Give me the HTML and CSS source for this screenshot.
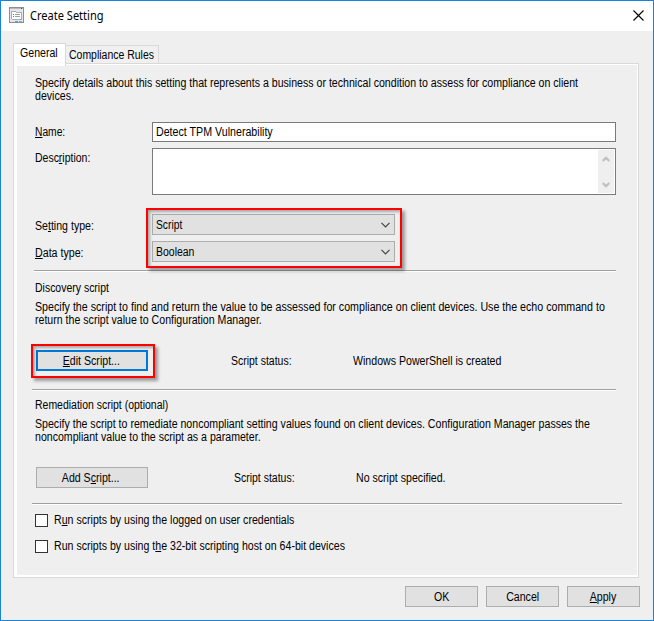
FILE: index.html
```html
<!DOCTYPE html>
<html lang="en">
<head>
<meta charset="utf-8">
<title>Create Setting</title>
<link rel="stylesheet" href="styles.css">
</head>
<body>
<div class="window">
  <header class="titlebar">
    <svg class="app-icon" width="15" height="16" viewBox="0 0 15 16" shape-rendering="crispEdges">
      <rect x="0.5" y="0.5" width="14" height="15" fill="#e4e6ea" stroke="#8b8f96"/>
      <rect x="1" y="1" width="13" height="1" fill="#b5b8be"/>
      <rect x="12" y="1" width="1" height="1" fill="#555"/>
      <rect x="3" y="5" width="9" height="8" fill="#fff"/>
      <path d="M2.5 4v8M3 4.5h4M7 5.5h5.500v7H3" fill="none" stroke="#a9adb4"/>
      <path d="M6 7.500h5M6 9.500h5" stroke="#9a9ea6"/>
      <path d="M4 7.500h1M4 9.500h1" stroke="#3f8fc8"/>
      <rect x="6" y="14" width="3" height="1" fill="#20b4e0"/><rect x="10" y="14" width="3" height="1" fill="#a2a6ad"/>
    </svg>
    <h1 class="title">Create Setting</h1>
    <svg class="close" width="11" height="11" viewBox="0 0 11 11"><path d="M.5.5l10 10M10.5.5l-10 10" stroke="#000" stroke-width="1.1" fill="none"/></svg>
  </header>
  <nav class="tabs">
    <div class="tab tab-active"><span class="text">General</span></div>
    <div class="tab"><span class="text text-snug">Compliance Rules</span></div>
  </nav>
  <main class="pane">
    <p class="intro"><span class="text">Specify details about this setting that represents a business or technical condition to assess for compliance on client</span><br><span class="text">devices.</span></p>
    <div class="fields">
      <label class="label"><span class="text text-tight"><u>N</u>ame:</span></label>
      <div class="input"><span class="text text-wide">Detect TPM Vulnerability</span></div>
      <label class="label label-top"><span class="text text-snug">Desc<u>r</u>iption:</span></label>
      <div class="textarea">
        <div class="scrollbar">
          <svg width="8" height="6" viewBox="0 0 8 6"><path d="M.7 5l3.3-3.3L7.3 5" fill="none" stroke="#bfbfbf" stroke-width="2.2"/></svg>
          <svg width="8" height="6" viewBox="0 0 8 6"><path d="M.7 1L4 4.3 7.3 1" fill="none" stroke="#bfbfbf" stroke-width="2.2"/></svg>
        </div>
      </div>
    </div>
    <div class="types">
      <div class="type-labels">
        <label class="label"><span class="text">Se<u>t</u>ting type:</span></label>
        <label class="label"><span class="text text-wide"><u>D</u>ata type:</span></label>
      </div>
      <div class="combos marked">
        <div class="combo"><span class="text text-tight">Script</span><svg width="9" height="6" viewBox="0 0 9 6"><path d="M.5.8l4 4 4-4" fill="none" stroke="#444" stroke-width="1.2"/></svg></div>
        <div class="combo"><span class="text text-snug">Boolean</span><svg width="9" height="6" viewBox="0 0 9 6"><path d="M.5.8l4 4 4-4" fill="none" stroke="#444" stroke-width="1.2"/></svg></div>
      </div>
    </div>
    <div class="rule rule-first"></div>
    <section class="section">
      <h2><span class="text text-snug">Discovery script</span></h2>
      <p><span class="text text-wide">Specify the script to find and return the value to be assessed for compliance on client devices. Use the echo command to</span><br><span class="text">return the script value to Configuration Manager.</span></p>
      <div class="action">
        <div class="marked marked-button"><div class="button button-wide button-focus"><span class="text"><u>E</u>dit Script...</span></div></div>
        <div><span class="text text-snug">Script status:</span></div>
        <div><span class="text">Windows PowerShell is created</span></div>
      </div>
    </section>
    <div class="rule"></div>
    <section class="section section-remedy">
      <h2><span class="text text-snug">Remediation script (optional)</span></h2>
      <p><span class="text">Specify the script to remediate noncompliant setting values found on client devices. Configuration Manager passes the</span><br><span class="text">noncompliant value to the script as a parameter.</span></p>
      <div class="action action-remedy">
        <div class="button button-wide"><span class="text">Add S<u>c</u>ript...</span></div>
        <div><span class="text text-snug">Script status:</span></div>
        <div><span class="text">No script specified.</span></div>
      </div>
    </section>
    <div class="rule rule-long"></div>
    <div class="checks">
      <label class="check"><i class="box"></i><span class="text">R<u>u</u>n scripts by using the logged on user credentials</span></label>
      <label class="check"><i class="box"></i><span class="text">Run scripts by using t<u>h</u>e 32-bit scripting host on 64-bit devices</span></label>
    </div>
  </main>
  <footer class="footer">
    <div class="button"><span class="text">OK</span></div>
    <div class="button"><span class="text">Cancel</span></div>
    <div class="button"><span class="text"><u>A</u>pply</span></div>
  </footer>
</div>
</body>
</html>
```
FILE: styles.css
```css
* { box-sizing: border-box; }
body { margin: 0; font: 12px/13px "Liberation Sans", Arial, sans-serif; color: #000; white-space: nowrap; }
h1, h2, p { margin: 0; font-size: 12px; font-weight: normal; }
u { text-underline-offset: 1px; text-decoration-thickness: 1px; }

/* Condensed dialog lettering */
.text { display: inline-block; vertical-align: top; transform: scaleX(.883); transform-origin: 0 50%; }
.text-tight { transform: scaleX(.855); }
.text-snug { transform: scaleX(.873); }
.text-wide { transform: scaleX(.888); }

.window { width: 654px; height: 621px; border: 1px solid #1883d7; background: #efefef; overflow: hidden; }
.titlebar { display: flex; align-items: center; height: 30px; padding: 0 9px 0 8px; background: #fff; }
.app-icon { margin-bottom: 2px; }
.title { margin-left: 6px; font: 12px/16px "Noto Sans", sans-serif; transform: scaleX(.92); transform-origin: 0 50%; }
.close { margin: 0 0 1px auto; }

.tabs { display: flex; align-items: flex-end; height: 33px; padding-left: 12px; }
.tab { display: flex; align-items: center; height: 18px; width: 93px; padding: 2px 0 0 3px; margin-bottom: 1px; background: #f0f0f0; border: 1px solid #d9d9d9; border-bottom: 0; border-left: 0; }
.tab-active { width: 53px; height: 23px; margin-bottom: -2px; padding: 0 0 3px 6px; background: #fff; border-left: 1px solid #d9d9d9; position: relative; }

.pane { margin: -1px 0 0 12px; width: 626px; height: 515px; padding: 13px 0 0 14px; background: #efefef; border: 1px solid #d9d9d9; box-shadow: inset 3px 1px #fff, inset -1px -2px #fff; }
.intro { margin-left: 7px; }
.fields { display: grid; grid-template-columns: 117px 464px; grid-template-rows: 20px 47px; row-gap: 6px; margin: 19px 0 0 7px; }
.label { display: flex; align-items: center; padding-top: 1px; }
.label-top { align-items: flex-start; padding-top: 4px; }
.input { display: flex; align-items: center; padding: 1px 0 0 3px; background: #fff; border: 1px solid #7a7a7a; }
.textarea { display: flex; justify-content: flex-end; padding: 1px; background: #fff; border: 1px solid #7a7a7a; }
.scrollbar { display: flex; flex-direction: column; justify-content: space-between; align-items: center; width: 16px; padding: 6px 1px 5px 0; background: #efefef; }

.types { display: flex; margin: 19px 0 0 7px; }
.type-labels { display: grid; grid-template-rows: 21px 21px; row-gap: 6px; width: 117px; padding-top: 1px; }
.type-labels .label { padding-top: 2px; }
.combos { display: grid; grid-template-rows: 21px 21px; row-gap: 6px; width: 243px; height: 48px; }
.combo { display: flex; align-items: center; justify-content: space-between; padding: 0 4px 0 3px; background: #e1e1e1; border: 1px solid #adadad; }
.combo .text { margin-top: 2px; }

.marked { position: relative; }
.marked::after { content: ""; position: absolute; inset: -6px -7px -6px -6px; border: 2px solid #f00; box-shadow: 3px 3px 3px rgba(0,0,0,.35), inset 2px 2px 3px rgba(0,0,0,.3); }
.marked-button { width: 112px; }
.marked-button::after { inset: -6px -7px -7px -5px; }

.rule { width: 584px; height: 2px; margin-left: 4px; background: linear-gradient(#a0a0a0 1px, #fff 1px); }
.rule-first { width: 582px; margin: 7px 0 0 6px; }
.rule-long { width: 590px; }

.section { height: 117px; padding: 10px 0 0 7px; }
.section-remedy { height: 112px; padding-top: 8px; }
.section h2 { margin-bottom: 6px; }
.action { display: grid; grid-template-columns: 195px 122px auto; justify-content: start; align-items: center; height: 21px; margin: 23px 0 0 1px; }
.action-remedy { grid-template-columns: 198px 122px auto; }
.action .text { margin-top: 2px; }

.button { display: flex; align-items: center; justify-content: center; width: 73px; height: 21px; background: #e1e1e1; border: 1px solid #adadad; }
.button .text { margin-top: 2px; transform-origin: 50% 50%; }
.button-wide { width: 112px; }
.button-wide .text { position: relative; left: -1px; }
.button-focus { border: 2px solid #0078d7; }

.checks { display: grid; row-gap: 13px; margin: 9px 0 0 7px; }
.check { display: flex; align-items: center; height: 13px; }
.box { width: 13px; height: 13px; margin-right: 6px; background: #fff; border: 1px solid #333; }
.footer { display: flex; justify-content: flex-end; gap: 8px; margin: 8px 13px 0 0; }
```
